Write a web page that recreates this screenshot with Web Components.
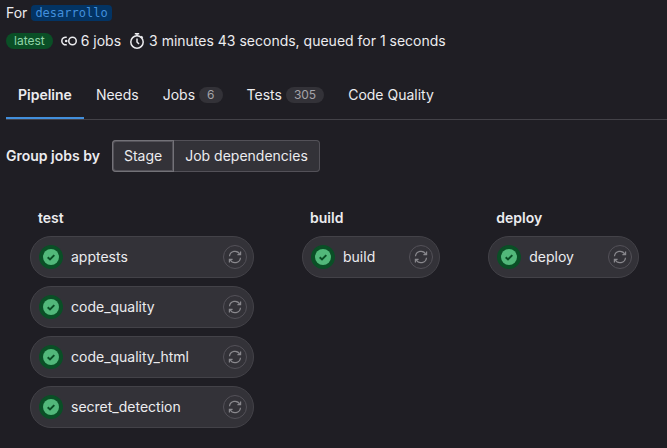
<!DOCTYPE html>
<html lang="en">
<head>
<meta charset="utf-8">
<title>Pipeline</title>
<style>
  body { margin: 0; background: #1f1e24; color: #ececef; font: 14px/20px Inter, "Noto Sans", sans-serif; }
</style>
</head>
<body>
<pipeline-page></pipeline-page>
<script>
const define = (name, html, setup) => {
  const template = document.createElement('template');
  template.innerHTML = '<style>*{box-sizing:border-box}</style>' + html;
  customElements.define(name, class extends HTMLElement {
    constructor() {
      super();
      this.attachShadow({ mode: 'open' }).append(template.content.cloneNode(true));
    }
    connectedCallback() { if (setup) setup(this, this.shadowRoot); }
  });
};

define('ref-link', `
<style>
  :host { display: inline-flex; }
  a { background: #033464; color: #428fdc; border-radius: 4px; padding: 0 4px; font: 12px/16px "DejaVu Sans Mono", monospace; text-decoration: none; }
</style>
<a href="#"><slot></slot></a>`);

define('status-badge', `
<style>
  :host { display: inline-flex; background: #0a4f26; color: #91d4a8; border-radius: 8px; padding: 0 8px; font-size: 12px; line-height: 16px; }
</style>
<slot></slot>`);

define('count-badge', `
<style>
  :host { display: inline-flex; background: #333238; color: #a4a3a8; border-radius: 8px; padding: 0 8px; font-size: 12px; line-height: 16px; }
</style>
<slot></slot>`);

define('pipeline-header', `
<style>
  :host { display: flex; flex-direction: column; gap: 8px; }
  .row { display: flex; align-items: center; gap: 8px; }
  .for { gap: 4px; }
  .stat { display: flex; align-items: center; gap: 4px; }
  svg { width: 16px; height: 16px; fill: none; stroke: currentColor; stroke-width: 1.5; }
</style>
<div class="row for"><span>For</span><ref-link>desarrollo</ref-link></div>
<div class="row">
  <status-badge>latest</status-badge>
  <span class="stat"><svg viewBox="0 0 16 16"><circle cx="11.5" cy="8" r="3.75"/><path d="M5.8 4.4A3.8 3.8 0 1 0 5.8 11.6"/><circle cx="5.2" cy="8" r="1.3" fill="currentColor" stroke="none"/></svg>6 jobs</span>
  <span class="stat"><svg viewBox="0 0 16 16"><circle cx="8" cy="9" r="6.2"/><path d="M8 5.5V9l2 2M5.8.8h4.4M8 1v2M12.2 3.2l1.5 1.5"/></svg>3 minutes 43 seconds, queued for 1 seconds</span>
</div>`);

define('tab-bar', `
<style>:host { display: flex; border-bottom: 1px solid #434248; }</style><slot></slot>`);

define('tab-item', `
<style>
  :host { display: flex; }
  a { display: flex; align-items: center; gap: 4px; height: 48px; padding: 0 12px; color: inherit; text-decoration: none; white-space: nowrap; }
  :host([active]) a { font-weight: 600; box-shadow: inset 0 -2px #428fdc; }
</style>
<a href="#"><slot></slot><slot name="count"></slot></a>`,
(el, root) => { if (el.hasAttribute('active')) root.querySelector('a').setAttribute('aria-current', 'page'); });

define('group-switch', `
<style>
  :host { display: flex; align-items: center; gap: 12px; }
  b { font-weight: 600; }
  div { display: flex; }
  button { font: inherit; color: inherit; height: 32px; padding: 0 12px; margin: 0; border: 0; background: #333238; box-shadow: inset 0 0 0 1px #535158; white-space: nowrap; }
  button:first-child { border-radius: 4px 0 0 4px; box-shadow: inset 0 0 0 1px #737278, inset 0 0 0 2px #535158; position: relative; z-index: 1; }
  button:last-child { border-radius: 0 4px 4px 0; margin-left: -1px; }
</style>
<b id="l">Group jobs by</b>
<div role="group" aria-labelledby="l"><button aria-pressed="true">Stage</button><button aria-pressed="false">Job dependencies</button></div>`);

define('job-pill', `
<style>
  :host { display: flex; align-items: center; gap: 8px; height: 42px; padding: 0 6px 0 8px; border: 1px solid #434248; border-radius: 21px; background: #333238; }
  .ok { width: 24px; height: 24px; flex: none; }
  a { color: inherit; text-decoration: none; flex: 1; padding-right: 26px; white-space: nowrap; }
  button { display: grid; place-items: center; flex: none; width: 24px; height: 24px; padding: 0; border: 1px solid #535158; border-radius: 50%; background: none; color: #89888d; }
  button svg { width: 14px; height: 14px; fill: none; stroke: currentColor; stroke-width: 1.2; }
</style>
<svg class="ok" viewBox="0 0 24 24"><circle cx="12" cy="12" r="12" fill="#0a4f26"/><circle cx="12" cy="12" r="8" fill="#52b87a"/><path d="M8.7 12.2l2.3 2.2 4.3-4.3" fill="none" stroke="#0a4f26" stroke-width="2"/></svg>
<a href="#"><slot></slot></a>
<button><svg viewBox="0 0 14 14"><path d="M1.5 6.3A5.5 5.5 0 0 1 11.8 4.2M12.5 7.7A5.5 5.5 0 0 1 2.2 9.8M12.6 1.4V4.6H9.4M1.4 12.6V9.4H4.6"/></svg></button>`,
(el, root) => root.querySelector('button').setAttribute('aria-label', 'Run again: ' + el.textContent));

define('job-stage', `
<style>
  :host { display: flex; flex-direction: column; gap: 8px; }
  h3 { margin: 0; padding: 0 8px; font-size: 14px; font-weight: 600; line-height: 20px; }
</style>
<h3></h3><slot></slot>`,
(el, root) => { root.querySelector('h3').textContent = el.getAttribute('name'); });

define('pipeline-graph', `
<style>:host { display: flex; align-items: flex-start; gap: 48px; padding: 0 24px; }</style><slot></slot>`);

define('pipeline-page', `
<style>
  :host { display: block; padding: 3px 0 20px 6px; }
  tab-bar { margin: 20px 0; }
  pipeline-graph { margin-top: 36px; }
</style>
<pipeline-header></pipeline-header>
<tab-bar>
  <tab-item active>Pipeline</tab-item><tab-item>Needs</tab-item>
  <tab-item>Jobs <count-badge slot="count">6</count-badge></tab-item>
  <tab-item>Tests <count-badge slot="count">305</count-badge></tab-item>
  <tab-item>Code Quality</tab-item>
</tab-bar>
<group-switch></group-switch>
<pipeline-graph>
  <job-stage name="test"><job-pill>apptests</job-pill><job-pill>code_quality</job-pill><job-pill>code_quality_html</job-pill><job-pill>secret_detection</job-pill></job-stage>
  <job-stage name="build"><job-pill>build</job-pill></job-stage>
  <job-stage name="deploy"><job-pill>deploy</job-pill></job-stage>
</pipeline-graph>`);
</script>
</body>
</html>
